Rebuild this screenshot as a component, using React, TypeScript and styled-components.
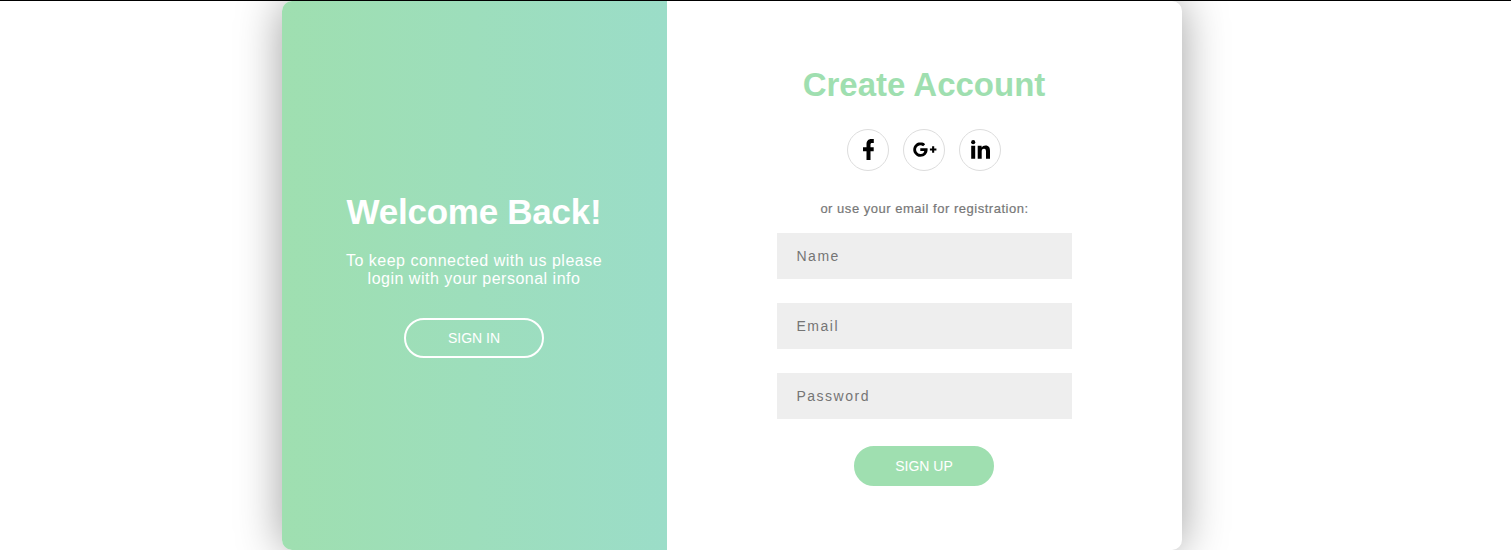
import React from "react";
import styled, { createGlobalStyle } from "styled-components";

const GlobalStyle = createGlobalStyle`
  * { box-sizing: border-box; }
  body { margin: 0; background: #fff; font-family: "Liberation Sans", Arial, sans-serif; overflow: hidden; }
`;
const Page = styled.main`
  height: 550px;
  border-top: 1px solid #000;
  padding-left: 282px;
`;
const Card = styled.section`
  display: flex;
  width: 900px;
  height: 549px;
  border-radius: 10px;
  overflow: hidden;
  background: #fff;
  box-shadow: 0 0 45px rgba(0, 0, 0, 0.38);
`;
const Welcome = styled.div`
  width: 385px;
  display: flex;
  flex-direction: column;
  align-items: center;
  padding-top: 190px;
  color: #fff;
  text-align: center;
  background: linear-gradient(to right, #9fdfb0, #9bddc8);
`;
const WelcomeTitle = styled.h1`
  margin: 0 1px 0 0;
  font-size: 35px;
  line-height: 41px;
  letter-spacing: -0.25px;
`;
const WelcomeText = styled.p`
  margin: 20px 1px 30px 0;
  width: 270px;
  font-size: 16px;
  line-height: 18px;
  letter-spacing: 0.5px;
`;
const Pill = styled.button<{ $filled?: boolean }>`
  width: 140px;
  height: 40px;
  margin: 0 1px 0 0;
  padding: 0;
  border: 2px solid ${(p) => (p.$filled ? "#9fdfb0" : "#fff")};
  border-radius: 20px;
  background: ${(p) => (p.$filled ? "#9fdfb0" : "transparent")};
  color: #fff;
  font: 14px "Liberation Sans", Arial, sans-serif;
`;
const Register = styled.form`
  flex: 1;
  display: flex;
  flex-direction: column;
  align-items: center;
  padding-top: 64px;
`;
const Title = styled.h2`
  margin: 0 1px 0 0;
  color: #9fdfb0;
  font-size: 33px;
  line-height: 39px;
`;
const Socials = styled.div`
  display: flex;
  gap: 14px;
  margin: 25px 1px 30px 0;
`;
const Social = styled.span`
  width: 42px;
  height: 42px;
  display: grid;
  place-items: center;
  border: 1px solid #ddd;
  border-radius: 50%;
`;
const Hint = styled.p`
  margin: 0 0 17px;
  color: #777;
  font-size: 13px;
  line-height: 15px;
  letter-spacing: 0.52px;
  -webkit-text-stroke: 0.2px #777;
`;
const Field = styled.input`
  width: 295px;
  height: 46px;
  margin-bottom: 24px;
  padding: 0 19.5px;
  border: 0;
  background: #eee;
  font: 14px "Liberation Sans", Arial, sans-serif;
  letter-spacing: 1.5px;
  &::placeholder { color: #757575; }
`;
const SubmitRow = styled.div`
  padding-top: 3px;
`;

const Facebook = () => (
  <svg width="40" height="40" viewBox="0 0 40 40">
    <path d="M18.500 30v-8.700h-3.500v-4h3.500v-3c0-3.200 1.800-5.300 4.600-5.300h2.700v4h-1.700c-1.200 0-1.600.6-1.600 1.600v2.700h3.200v4h-3.200v8.700z" />
  </svg>
);
const GooglePlus = () => (
  <svg width="40" height="40" viewBox="0 0 40 40">
    <path transform="translate(8.700 11.600)" d="M7.600 6.600v2.800h4a3.700 3.700 0 0 1-4 2.900 4.300 4.300 0 1 1 2.800-7.600l2.100-2.100A7.200 7.200 0 1 0 7.600 15.200c4.400 0 7.300-3 7.300-7.200 0-.5 0-1-.1-1.400z" />
    <path d="M28.100 16.300h2.100v2.200h2.200v2.100h-2.200v2.200h-2.100v-2.200h-2.200v-2.100h2.200z" />
  </svg>
);
const LinkedIn = () => (
  <svg width="40" height="40" viewBox="0 0 40 40">
    <circle cx="13.200" cy="12.200" r="2.100" />
    <path d="M11.200 15.800h4v13h-4zM17.700 15.800h3.900v1.700c.7-1.200 2.100-2 3.900-2 3.500 0 4.500 2.300 4.500 5.500v7.800h-4v-7c0-1.700-.3-3-2-3-1.800 0-2.300 1.300-2.300 3v7h-4z" />
  </svg>
);

export default function App() {
  return (
    <>
      <GlobalStyle />
      <Page>
        <Card>
          <Welcome>
            <WelcomeTitle>Welcome Back!</WelcomeTitle>
            <WelcomeText>To keep connected with us please login with your personal info</WelcomeText>
            <Pill>SIGN IN</Pill>
          </Welcome>
          <Register>
            <Title>Create Account</Title>
            <Socials>
              <Social><Facebook /></Social>
              <Social><GooglePlus /></Social>
              <Social><LinkedIn /></Social>
            </Socials>
            <Hint>or use your email for registration:</Hint>
            <Field placeholder="Name" />
            <Field placeholder="Email" />
            <Field placeholder="Password" type="password" />
            <SubmitRow><Pill $filled type="button">SIGN UP</Pill></SubmitRow>
          </Register>
        </Card>
      </Page>
    </>
  );
}
